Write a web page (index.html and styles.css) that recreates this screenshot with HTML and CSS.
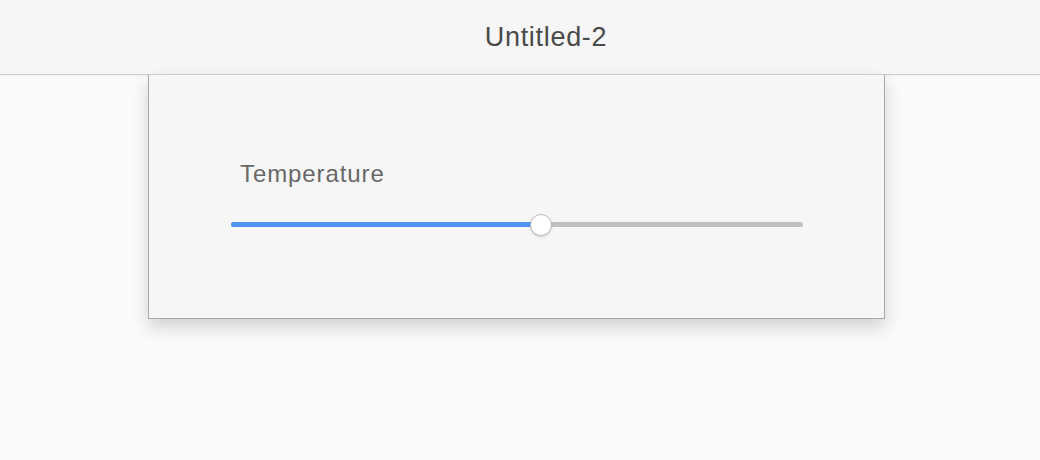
FILE: index.html
```html
<!DOCTYPE html>
<html>
<head>
<meta charset="utf-8">
<link rel="stylesheet" href="styles.css">
</head>
<body>
<header class="titlebar"><span class="title">Untitled-2</span></header>
<main class="stage">
  <section class="panel">
    <div class="label">Temperature</div>
    <div class="slider">
      <div class="track">
        <div class="fill" style="width:54.2%"></div>
        <div class="thumb" style="left:54.2%"></div>
      </div>
    </div>
  </section>
</main>
</body>
</html>
```
FILE: styles.css
```css
html, body {
  margin: 0;
  padding: 0;
  width: 1040px;
  height: 460px;
  overflow: hidden;
  background: #fafafa;
  font-family: "Liberation Sans", Arial, sans-serif;
}
.titlebar {
  height: 74px;
  background: #f6f6f6;
  border-bottom: 1px solid #cfcfcf;
  box-shadow: 0 1px 2px rgba(0,0,0,0.06);
  display: flex;
  align-items: center;
  justify-content: center;
  padding-left: 52px;
  box-sizing: content-box;
  position: relative;
  z-index: 1;
}
.title {
  font-size: 27px;
  letter-spacing: 0.7px;
  color: #4a4a4a;
  margin-top: 1px;
}
.stage {
  padding-left: 148px;
}
.panel {
  width: 737px;
  height: 244px;
  background: #f6f6f6;
  border: 1px solid #a8a8a8;
  border-top: none;
  box-shadow: 0 8px 16px rgba(0,0,0,0.16);
  padding: 84px 0 0 82px;
  box-sizing: border-box;
  position: relative;
  z-index: 2;
}
.label {
  font-size: 24px;
  letter-spacing: 0.9px;
  color: #686868;
  padding-left: 9px;
  line-height: 28px;
  margin-top: 1px;
}
.slider {
  margin-top: 34px;
  width: 572px;
}
.track {
  position: relative;
  height: 5px;
  border-radius: 3px;
  background: #c0c0c0;
}
.fill {
  height: 5px;
  border-radius: 3px 0 0 3px;
  background: #4f94f4;
}
.thumb {
  position: absolute;
  top: 50%;
  width: 20px;
  height: 20px;
  margin: -11px 0 0 -11px;
  border-radius: 50%;
  background: #ffffff;
  border: 1px solid #bdbdbd;
  box-shadow: 0 1px 2px rgba(0,0,0,0.15);
}
```
